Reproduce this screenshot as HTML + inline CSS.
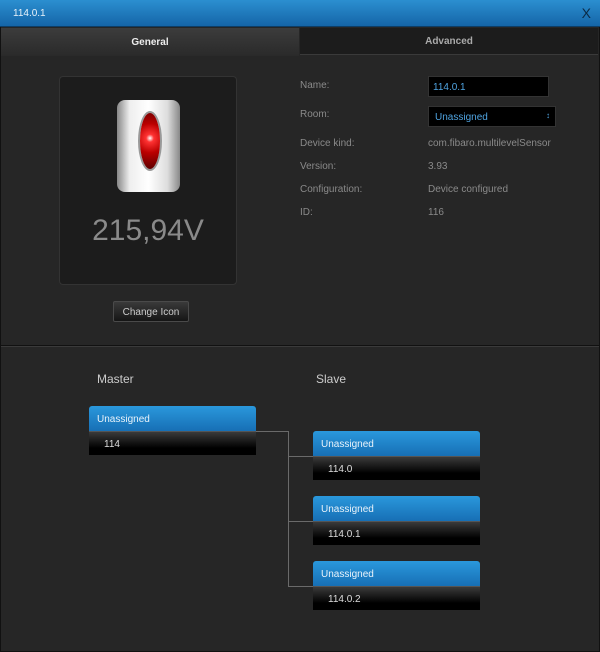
<!DOCTYPE html>
<html><head><style>
*{margin:0;padding:0;box-sizing:border-box}
body{width:600px;height:652px;background:#262626;font-family:"Liberation Sans",sans-serif;position:relative;overflow:hidden;color:#999}
.a{position:absolute}
.title{left:0;top:0;width:600px;height:27px;background:linear-gradient(#2b8fd0,#1565a8);border-bottom:1px solid #0d3d66}
.lbl{font-size:10px;color:#8a8a8a}
.val{font-size:10px;color:#8a8a8a}
.bh{height:25px;background:linear-gradient(#2a98dc,#176fb5);border-radius:3px 3px 0 0;color:#e8f2fa;font-size:10px;padding:8px 0 0 8px}
.br{height:24px;background:linear-gradient(#3a3a3a,#000 70%);color:#ddd;font-size:10px;padding:7px 0 0 15px;border-top:1px solid #555}
.ln{background:#6a6a6a}
</style></head><body>
<div class="a" style="left:0;top:0;width:600px;height:652px;border:1px solid #111"></div>
<div class="a title"><span class="a" style="left:13px;top:8px;font-size:10px;color:#e8f2fa">114.0.1</span><span class="a" style="right:9px;top:5px;font-size:14px;color:#0b2a45;font-family:'Liberation Sans'">X</span></div>
<div class="a" style="left:1px;top:28px;width:298px;height:28px;background:linear-gradient(#3c3c3c,#2a2a2a);color:#eee;font-weight:bold;font-size:10px;text-align:center;padding-top:9px">General</div>
<div class="a" style="left:300px;top:28px;width:298px;height:27px;background:#1c1c1c;color:#aaa;font-weight:bold;font-size:10px;text-align:center;padding-top:8px;border-bottom:1px solid #3a3a3a">Advanced</div>
<div class="a" style="left:59px;top:76px;width:178px;height:209px;background:#1c1c1c;border:1px solid #333;border-radius:4px"></div>
<div class="a" style="left:117px;top:100px;width:63px;height:92px;border-radius:8px;background:linear-gradient(90deg,#888,#eee 20%,#fff 50%,#ddd 80%,#888)"></div>
<div class="a" style="left:140px;top:113px;width:20px;height:56px;border-radius:50%;background:radial-gradient(circle at 50% 45%,#fff 0,#f33 12%,#b00 45%,#500 100%);box-shadow:0 0 0 2px #999"></div>
<div class="a" style="left:59px;top:214px;width:178px;text-align:center;font-size:30px;color:#8a8a8a">215,94V</div>
<div class="a" style="left:113px;top:301px;width:76px;height:21px;background:linear-gradient(#3a3a3a,#151515);border:1px solid #4a4a4a;border-radius:2px;color:#ccc;font-size:10px;text-align:center;padding-top:5px">Change Icon</div>
<div class="a lbl" style="left:300px;top:80px">Name:</div>
<div class="a lbl" style="left:300px;top:109px">Room:</div>
<div class="a lbl" style="left:300px;top:138px">Device kind:</div>
<div class="a lbl" style="left:300px;top:161px">Version:</div>
<div class="a lbl" style="left:300px;top:184px">Configuration:</div>
<div class="a lbl" style="left:300px;top:207px">ID:</div>
<div class="a" style="left:428px;top:76px;width:121px;height:21px;background:#000;border:1px solid #333;color:#4fa3e0;font-size:10px;padding:5px 0 0 4px">114.0.1</div>
<div class="a" style="left:428px;top:106px;width:128px;height:21px;background:#000;border:1px solid #333;color:#4fa3e0;font-size:10px;padding:5px 0 0 6px">Unassigned<span class="a" style="right:5px;top:4px;font-size:8px">&#8597;</span></div>
<div class="a val" style="left:428px;top:138px">com.fibaro.multilevelSensor</div>
<div class="a val" style="left:428px;top:161px">3.93</div>
<div class="a val" style="left:428px;top:184px">Device configured</div>
<div class="a val" style="left:428px;top:207px">116</div>
<div class="a" style="left:1px;top:345px;width:598px;height:1px;background:#111"></div>
<div class="a" style="left:1px;top:346px;width:598px;height:1px;background:#3a3a3a"></div>
<div class="a" style="left:97px;top:372px;font-size:12px;color:#ccc">Master</div>
<div class="a" style="left:316px;top:372px;font-size:12px;color:#ccc">Slave</div>
<div class="a ln" style="left:256px;top:431px;width:33px;height:1px"></div>
<div class="a ln" style="left:288px;top:431px;width:1px;height:156px"></div>
<div class="a ln" style="left:288px;top:456px;width:25px;height:1px"></div>
<div class="a ln" style="left:288px;top:521px;width:25px;height:1px"></div>
<div class="a ln" style="left:288px;top:586px;width:25px;height:1px"></div>
<div class="a" style="left:89px;top:406px;width:167px"><div class="bh">Unassigned</div><div class="br">114</div></div>
<div class="a" style="left:313px;top:431px;width:167px"><div class="bh">Unassigned</div><div class="br">114.0</div></div>
<div class="a" style="left:313px;top:496px;width:167px"><div class="bh">Unassigned</div><div class="br">114.0.1</div></div>
<div class="a" style="left:313px;top:561px;width:167px"><div class="bh">Unassigned</div><div class="br">114.0.2</div></div>
</body></html>
